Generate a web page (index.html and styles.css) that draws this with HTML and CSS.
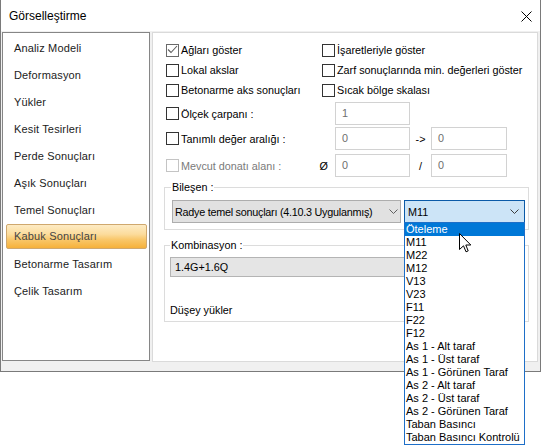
FILE: index.html
```html
<!DOCTYPE html>
<html lang="tr">
<head>
<meta charset="utf-8">
<title>Görselleştirme</title>
<link rel="stylesheet" href="styles.css">
</head>
<body>
<div class="window">
  <div class="titlebar">
    <span class="title">Görselleştirme</span>
    <svg class="close" width="11" height="11" viewBox="0 0 11 11"><path d="M0.5 0.5L10.5 10.5M10.5 0.5L0.5 10.5" stroke="#000" stroke-width="1" fill="none"/></svg>
  </div>
  <div class="content">
    <ul class="sidebar">
      <li class="nav-item">Analiz Modeli</li>
      <li class="nav-item">Deformasyon</li>
      <li class="nav-item">Yükler</li>
      <li class="nav-item">Kesit Tesirleri</li>
      <li class="nav-item">Perde Sonuçları</li>
      <li class="nav-item">Aşık Sonuçları</li>
      <li class="nav-item">Temel Sonuçları</li>
      <li class="nav-item active">Kabuk Sonuçları</li>
      <li class="nav-item">Betonarme Tasarım</li>
      <li class="nav-item">Çelik Tasarım</li>
    </ul>
    <div class="panel">
      <div class="check-row">
        <div class="check-col"><span class="cb checked"><svg width="11" height="11" viewBox="0 0 11 11"><polyline points="1,4.5 4,7.5 10,1" fill="none" stroke="#5e5e5e" stroke-width="1.1"/></svg></span>Ağları göster</div>
        <div class="check-col"><span class="cb"></span>İşaretleriyle göster</div>
      </div>
      <div class="check-row">
        <div class="check-col"><span class="cb"></span>Lokal akslar</div>
        <div class="check-col"><span class="cb"></span>Zarf sonuçlarında min. değerleri göster</div>
      </div>
      <div class="check-row">
        <div class="check-col"><span class="cb"></span>Betonarme aks sonuçları</div>
        <div class="check-col"><span class="cb"></span>Sıcak bölge skalası</div>
      </div>
      <div class="field-row">
        <div class="field-label"><span class="cb"></span>Ölçek çarpanı :</div>
        <div class="input">1</div>
      </div>
      <div class="field-row">
        <div class="field-label"><span class="cb"></span>Tanımlı değer aralığı :</div>
        <div class="input">0</div>
        <span class="sep">-&gt;</span>
        <div class="input input-2">0</div>
      </div>
      <div class="field-row field-row-last">
        <div class="field-label disabled"><span class="cb"></span>Mevcut donatı alanı :<span class="phi">Ø</span></div>
        <div class="input">0</div>
        <span class="sep">/</span>
        <div class="input input-2">0</div>
      </div>
      <div class="group group-bilesen">
        <div class="group-title title-bilesen">Bileşen :</div>
        <div class="combo-row">
          <div class="combo combo-wide"><span class="combo-text combo-text-wide">Radye temel sonuçları (4.10.3 Uygulanmış)</span><svg class="chev chev-wide" width="9" height="5" viewBox="0 0 9 5"><polyline points="0.5,0.5 4.5,4.5 8.5,0.5" fill="none" stroke="#606060" stroke-width="1"/></svg></div>
          <div class="combo combo-focus"><span class="combo-text">M11</span><svg class="chev chev-focus" width="9" height="5" viewBox="0 0 9 5"><polyline points="0.5,0.5 4.5,4.5 8.5,0.5" fill="none" stroke="#3c3c3c" stroke-width="1"/></svg>
            <ul class="droplist">
              <li class="sel">Öteleme</li>
              <li>M11</li>
              <li>M22</li>
              <li>M12</li>
              <li>V13</li>
              <li>V23</li>
              <li>F11</li>
              <li>F22</li>
              <li>F12</li>
              <li>As 1 - Alt taraf</li>
              <li>As 1 - Üst taraf</li>
              <li>As 1 - Görünen Taraf</li>
              <li>As 2 - Alt taraf</li>
              <li>As 2 - Üst taraf</li>
              <li>As 2 - Görünen Taraf</li>
              <li>Taban Basıncı</li>
              <li>Taban Basıncı Kontrolü</li>
              <svg class="cursor" width="13" height="20" viewBox="0 0 13 20"><path d="M0.5 0.5L0.5 16.5L4.5 12.8L7 18.8L9.2 17.9L6.8 12L11.8 12Z" fill="#fff" stroke="#000" stroke-width="1" stroke-linejoin="miter"/></svg>
            </ul>
          </div>
        </div>
      </div>
      <div class="group group-komb">
        <div class="group-title">Kombinasyon :</div>
        <div class="combo-flat">1.4G+1.6Q</div>
        <div class="group-text">Düşey yükler</div>
      </div>
    </div>
  </div>
</div>
</body>
</html>
```

FILE: styles.css
```css
* { box-sizing: border-box; }
html, body { margin: 0; padding: 0; background: #fff; }
body {
  width: 542px;
  height: 446px;
  overflow: hidden;
  font-family: "Liberation Sans", Arial, sans-serif;
  font-size: 11px;
  color: #000;
}
.window {
  width: 541px;
  height: 372px;
  border: 1px solid #7a7a7a;
  border-top: none;
  background: #f0f0f0;
  display: flex;
  flex-direction: column;
}
.titlebar {
  height: 31px;
  flex: none;
  background: #fff;
  display: flex;
  align-items: center;
  justify-content: space-between;
  padding: 0 8px 0 8px;
}
.title { font-size: 12px; color: #000; }
.close { margin-top: 2px; }
.content {
  flex: 1;
  display: flex;
  align-items: flex-start;
  gap: 2px;
  padding: 1px 2px 0 1px;
}
.sidebar {
  list-style: none;
  margin: 0;
  width: 148px;
  height: 329px;
  flex: none;
  background: #fff;
  border: 1px solid #868686;
  padding: 3px 0 0 0;
  display: flex;
  flex-direction: column;
  gap: 2px;
}
.nav-item {
  height: 25px;
  margin: 0 2px 0 3px;
  padding-left: 7px;
  border: 1px solid transparent;
  line-height: 23px;
  color: #1c1c1c;
  white-space: nowrap;
  letter-spacing: 0.15px;
}
.nav-item.active {
  margin-top: -1px;
  margin-bottom: 1px;
  background: linear-gradient(to bottom, #fdebc4 0%, #fcdc9c 40%, #f9c86c 62%, #f6b13a 100%);
  border-color: #cfa86e;
  border-radius: 2px;
  color: #444;
}
.panel {
  width: 386px;
  height: 330px;
  flex: none;
  background: #fff;
  border: 1px solid #dadada;
  padding: 7px 8px 0 11px;
  display: flex;
  flex-direction: column;
  font-size: 10.8px;
}
.check-row {
  display: flex;
  align-items: center;
  height: 20px;
  padding-left: 2px;
}
.check-col {
  display: flex;
  align-items: center;
  width: 156px;
  white-space: nowrap;
}
.check-col + .check-col { width: auto; }
.cb {
  width: 13px;
  height: 13px;
  flex: none;
  border: 1px solid #333;
  background: #fff;
  margin-right: 2px;
  display: flex;
}
.cb.checked { border-color: #6a6a6a; }
.field-row {
  display: flex;
  align-items: center;
  height: 23px;
  padding-left: 2px;
  margin-top: 2px;
}
.field-row-last { margin-top: 4px; }
.field-label {
  width: 169px;
  flex: none;
  display: flex;
  align-items: center;
  white-space: nowrap;
}
.field-label.disabled { color: #7a7a7a; }
.field-label.disabled .cb { border-color: #c4c4c4; }
.phi { margin-left: auto; margin-right: 7px; color: #000; }
.input {
  width: 75px;
  height: 23px;
  flex: none;
  border: 1px solid #d2d2d2;
  background: #fff;
  padding-left: 6px;
  line-height: 21px;
  color: #6d6d6d;
}
.input-2 { width: 76px; }
.sep { width: 21px; flex: none; text-align: center; }
.group { border: 1px solid #dcdcdc; }
.group-title {
  width: max-content;
  background: #fff;
  padding: 0 1px;
  line-height: 14px;
  margin-top: -8px;
}
.title-bilesen { margin-left: -1px; }
.group-bilesen {
  margin-top: 10px;
  padding: 0 3px 6px 7px;
}
.combo-row {
  display: flex;
  gap: 3px;
  margin-top: 6px;
}
.combo {
  height: 23px;
  display: flex;
  align-items: center;
  border: 1px solid #adadad;
  white-space: nowrap;
}
.combo-wide {
  width: 229px;
  background: #e1e1e1;
  padding-left: 2px;
}
.combo-text-wide { letter-spacing: -0.25px; }
.combo-focus {
  width: 121px;
  background: #cce4f7;
  border-color: #0a5aa8;
  padding-left: 3px;
  position: relative;
}
.chev { margin-left: auto; flex: none; }
.chev-wide { margin-right: 2px; }
.chev-focus { margin-right: 5px; }
.droplist {
  position: absolute;
  left: -1px;
  top: 21px;
  width: 121px;
  margin: 0;
  padding: 0;
  list-style: none;
  background: #fff;
  border: 1px solid #1e6fc8;
  z-index: 5;
  font-size: 11px;
}
.droplist li {
  height: 13px;
  line-height: 13px;
  padding-left: 1px;
  white-space: nowrap;
  color: #000;
}
.droplist li.sel { background: #0078d7; color: #fff; }
.cursor { position: absolute; left: 54px; top: 10px; }
.group-komb {
  margin-top: 15px;
  padding: 0 3px 4px 5px;
}
.combo-flat {
  margin-top: 5px;
  height: 20px;
  background: #e5e5e5;
  border: 1px solid #b4b4b4;
  padding-left: 4px;
  line-height: 18px;
}
.group-text {
  margin-top: 26px;
  line-height: 14px;
}
```
